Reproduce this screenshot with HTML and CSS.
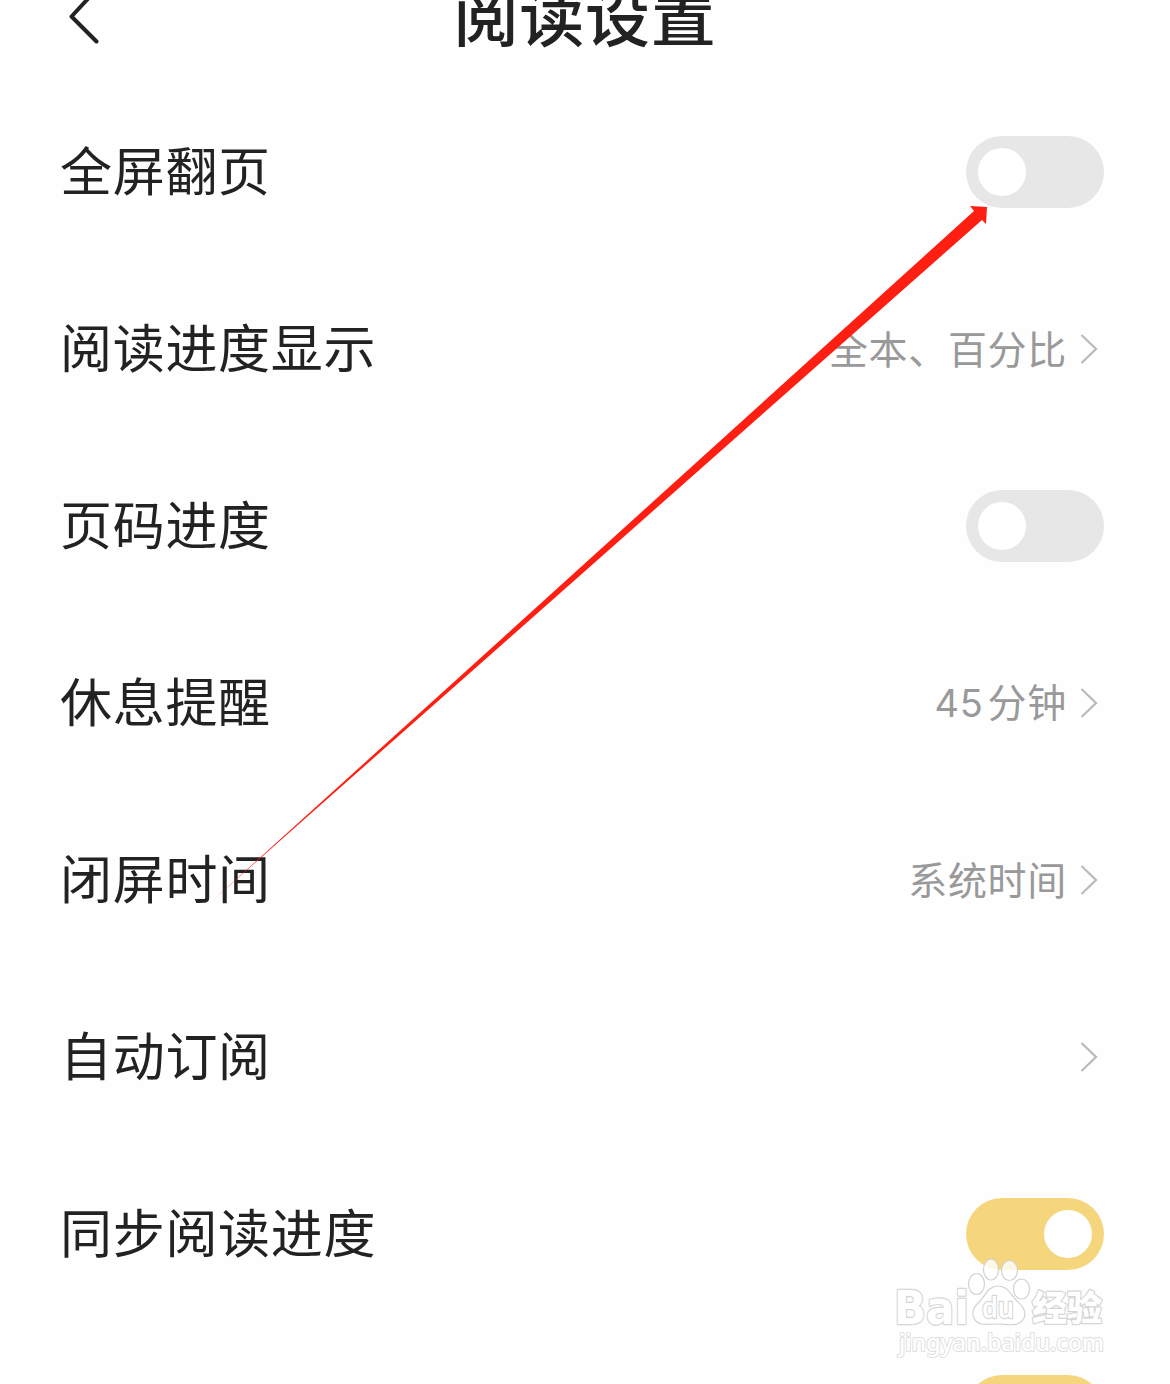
FILE: index.html
```
<!DOCTYPE html>
<html lang="zh-CN">
	<head>
		<meta charset="utf-8">
		<meta name="viewport" content="width=device-width, initial-scale=1">
		<link rel="stylesheet" href="styles.css">
		<title>阅读设置</title>
	</head>
	<body>
		<header class="header">
			<svg class="back" viewBox="0 0 32 56" width="32" height="56"><path d="M27.500 1.500 L2.500 28.500 L27.500 53.500"/></svg>
			<h1>阅读设置</h1>
		</header>
		<main class="settings">
			<div class="row">
				<span class="label">全屏翻页</span>
				<span class="toggle"></span>
			</div>
			<div class="row">
				<span class="label">阅读进度显示</span>
				<span class="value">全本、百分比</span>
				<svg class="chevron" viewBox="0 0 18 30" width="18" height="30"><path d="M1.500 1 L16 15 L1.500 29"/></svg>
			</div>
			<div class="row">
				<span class="label">页码进度</span>
				<span class="toggle"></span>
			</div>
			<div class="row">
				<span class="label">休息提醒</span>
				<span class="value"><span class="number">45</span>分钟</span>
				<svg class="chevron" viewBox="0 0 18 30" width="18" height="30"><path d="M1.500 1 L16 15 L1.500 29"/></svg>
			</div>
			<div class="row">
				<span class="label">闭屏时间</span>
				<span class="value">系统时间</span>
				<svg class="chevron" viewBox="0 0 18 30" width="18" height="30"><path d="M1.500 1 L16 15 L1.500 29"/></svg>
			</div>
			<div class="row">
				<span class="label">自动订阅</span>
				<svg class="chevron" viewBox="0 0 18 30" width="18" height="30"><path d="M1.500 1 L16 15 L1.500 29"/></svg>
			</div>
			<div class="row">
				<span class="label">同步阅读进度</span>
				<span class="toggle on"></span>
			</div>
			<div class="row">
				<span class="toggle on"></span>
			</div>
		</main>

		<!-- arrow pointing at the first switch -->
		<svg class="arrow" viewBox="0 0 1170 1384" width="1170" height="1384">
			<path d="M212 901 L974 211 L970 206 L987 207 L986 224 L982 220 Z"/>
		</svg>

		<svg class="watermark" viewBox="0 0 220 110" width="220" height="110">
			<g class="outline">
				<text class="bai" x="4" y="74" textLength="75" lengthAdjust="spacingAndGlyphs">Bai</text>
				<ellipse cx="86.500" cy="34" rx="8" ry="10.500"/>
				<ellipse cx="101" cy="19.500" rx="7.500" ry="10.500"/>
				<ellipse cx="119.500" cy="20.500" rx="8" ry="10"/>
				<ellipse cx="131.500" cy="39" rx="8" ry="10"/>
				<path d="M108 36 C98 36 96 45 90 51 C84 57 81 61 84 68 C88 77 99 74 108 74 C117 74 129 78 134 68 C137 60 131 55 126 50 C120 44 118 36 108 36 Z"/>
				<text class="du" x="92" y="68" textLength="32" lengthAdjust="spacingAndGlyphs">du</text>
				<text class="jingyan" x="142" y="71" textLength="70" lengthAdjust="spacingAndGlyphs">经验</text>
				<text class="site" x="9" y="101" textLength="205" lengthAdjust="spacingAndGlyphs">jingyan.baidu.com</text>
			</g>
		</svg>
	</body>
</html>
```
FILE: styles.css
```
* {
	margin: 0;
	padding: 0;
	box-sizing: border-box;
}
body {
	position: relative;
	height: 1384px;
	overflow: hidden;
	background-color: #fefefe;
	color: #222222;
	font-family: "Noto Sans CJK SC", sans-serif;
}
.header {
	display: grid;
	grid-template-columns: 102px 1fr 102px;
	height: 84px;
}
.header h1 {
	margin-top: -32px;
	height: 90px;
	line-height: 90px;
	text-align: center;
	font-size: 65px;
	font-weight: 500;
	letter-spacing: 0.8px;
}
.back {
	margin: -12px 0 0 69px;
	fill: none;
	stroke: #222222;
	stroke-width: 4;
	stroke-linecap: round;
	stroke-linejoin: round;
}
.settings {
	height: 1300px;
	overflow: hidden;
}
.row {
	display: flex;
	align-items: center;
	height: 176px;
	margin-bottom: 1px;
	padding: 0 66px 0 60px;
}
.label {
	padding-bottom: 6px;
	font-size: 52px;
	line-height: 76px;
	letter-spacing: 0.7px;
}
.value {
	margin-left: auto;
	padding-bottom: 4px;
	font-size: 39px;
	line-height: 56px;
	letter-spacing: 0.7px;
	color: #999999;
}
.number {
	margin-right: 4px;
	font-family: "Inter", sans-serif;
	font-size: 38px;
}
.chevron {
	margin: 0 6px 0 auto;
	fill: none;
	stroke: #bbbbbb;
	stroke-width: 2.3;
}
.value + .chevron {
	margin-left: 13px;
}
.toggle {
	display: flex;
	width: 138px;
	height: 72px;
	margin-left: auto;
	padding: 12px;
	border-radius: 36px;
	background-color: #e7e7e7;
}
.toggle::before {
	content: "";
	width: 48px;
	height: 48px;
	border-radius: 50%;
	background-color: #ffffff;
}
.toggle.on {
	justify-content: flex-end;
	background-color: #f5d67d;
}
.arrow {
	position: absolute;
	top: 0;
	left: 0;
	fill: #ff1f12;
}
.watermark {
	position: absolute;
	left: 890px;
	top: 1250px;
}
.outline {
	fill: rgba(255, 255, 255, 0.8);
	stroke: #d2d2d2;
	stroke-width: 1.2;
}
/* white letters with a grey rim outside the glyph */
.outline text {
	fill: #ffffff;
	stroke: #d6d6d6;
	stroke-width: 2.4;
	stroke-linejoin: round;
	paint-order: stroke;
}
.bai {
	font: bold 46px "DejaVu Sans", sans-serif;
}
.du {
	font: 600 29px "Noto Sans", sans-serif;
}
.jingyan {
	font: 900 35px "Noto Sans CJK SC", sans-serif;
}
.outline .site {
	stroke: #e0e0e0;
	stroke-width: 2;
	font: 500 24px "Noto Sans", sans-serif;
}
```
